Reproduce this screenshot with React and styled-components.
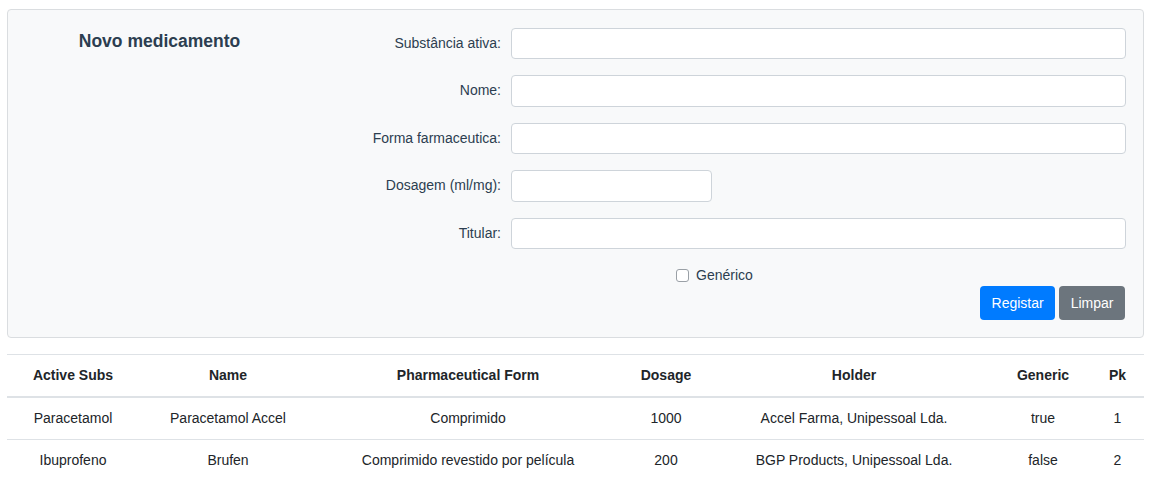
import React from "react";
import styled, { createGlobalStyle } from "styled-components";

const Global = createGlobalStyle`
  html, body { margin: 0; padding: 0; background: #fff; }
  body { font-family: "Liberation Sans", Arial, Helvetica, sans-serif; font-size: 14px; color: #2c3e50; }
  * { box-sizing: border-box; }
`;

const Page = styled.div`
  padding: 9px 10px 0 7px;
  width: 1154px;
`;

const Card = styled.section`
  display: flex;
  background: #f8f9fa;
  border: 1px solid #dadde0;
  border-radius: 4px;
  padding: 17.5px 17px 16.5px 0;
`;

const TitleCol = styled.div`
  width: 303px;
  flex: none;
  text-align: center;
  padding-top: 0.5px;
`;

const Title = styled.h3`
  margin: 0;
  font-size: 17.5px;
  line-height: 27px;
  font-weight: 700;
  color: #2c3e50;
`;

const Form = styled.form`
  flex: 1;
  display: flex;
  flex-direction: column;
`;

const Row = styled.div`
  display: grid;
  grid-template-columns: 190px 1fr;
  column-gap: 10px;
  align-items: center;
  margin-bottom: 16px;
`;

const Label = styled.label`
  text-align: right;
  line-height: 21px;
  color: #2c3e50;
`;

const Input = styled.input`
  height: 31.5px;
  width: ${(p) => (p.$short ? "201px" : "100%")};
  border: 1px solid #ced4da;
  border-radius: 4px;
  background: #fff;
  padding: 4px 8px;
  font: inherit;
  outline: none;
`;

const CheckRow = styled.div`
  display: flex;
  align-items: center;
  gap: 7px;
  height: 21px;
  margin-left: 365px;
  line-height: 21px;
  color: #2c3e50;
`;

const Box = styled.span`
  width: 13px;
  height: 13px;
  border: 1px solid #9aa0a6;
  border-radius: 3px;
  background: #fff;
  flex: none;
`;

const Actions = styled.div`
  display: flex;
  justify-content: flex-end;
  gap: 4px;
  padding-right: 1px;
`;

const Button = styled.button`
  height: 34px;
  padding: 0 11.5px;
  border: none;
  border-radius: 4px;
  font: inherit;
  font-size: 14px;
  color: #fff;
  background: ${(p) => (p.$variant === "secondary" ? "#6c757d" : "#007bff")};
  cursor: pointer;
`;

const Table = styled.table`
  margin-top: 16px;
  width: 1137px;
  border-collapse: collapse;
  table-layout: fixed;
  color: #212529;
  text-align: center;
`;

const Th = styled.th`
  font-weight: 700;
  padding: 10px 0;
  line-height: 21px;
  border-top: 1px solid #dee2e6;
  border-bottom: 2px solid #dee2e6;
`;

const Td = styled.td`
  padding: 10px 0;
  line-height: 21px;
  border-top: 1px solid #dee2e6;
`;

const cols = [132, 178, 302, 94, 282, 96, 53];
const headers = ["Active Subs", "Name", "Pharmaceutical Form", "Dosage", "Holder", "Generic", "Pk"];
const rows = [
  ["Paracetamol", "Paracetamol Accel", "Comprimido", "1000", "Accel Farma, Unipessoal Lda.", "true", "1"],
  ["Ibuprofeno", "Brufen", "Comprimido revestido por película", "200", "BGP Products, Unipessoal Lda.", "false", "2"],
];

const fields = [
  { label: "Substância ativa:" },
  { label: "Nome:" },
  { label: "Forma farmaceutica:" },
  { label: "Dosagem (ml/mg):", short: true },
  { label: "Titular:" },
];

export default function App() {
  return (
    <Page>
      <Global />
      <Card>
        <TitleCol>
          <Title>Novo medicamento</Title>
        </TitleCol>
        <Form onSubmit={(e) => e.preventDefault()}>
          {fields.map((f) => (
            <Row key={f.label}>
              <Label>{f.label}</Label>
              <Input $short={f.short} />
            </Row>
          ))}
          <CheckRow>
            <Box />
            <span>Genérico</span>
          </CheckRow>
          <Actions>
            <Button type="submit">Registar</Button>
            <Button type="button" $variant="secondary">Limpar</Button>
          </Actions>
        </Form>
      </Card>
      <Table>
        <colgroup>
          {cols.map((w, i) => (
            <col key={i} style={{ width: w }} />
          ))}
        </colgroup>
        <thead>
          <tr>
            {headers.map((h) => (
              <Th key={h}>{h}</Th>
            ))}
          </tr>
        </thead>
        <tbody>
          {rows.map((r) => (
            <tr key={r[6]}>
              {r.map((c, i) => (
                <Td key={i}>{c}</Td>
              ))}
            </tr>
          ))}
        </tbody>
      </Table>
    </Page>
  );
}
